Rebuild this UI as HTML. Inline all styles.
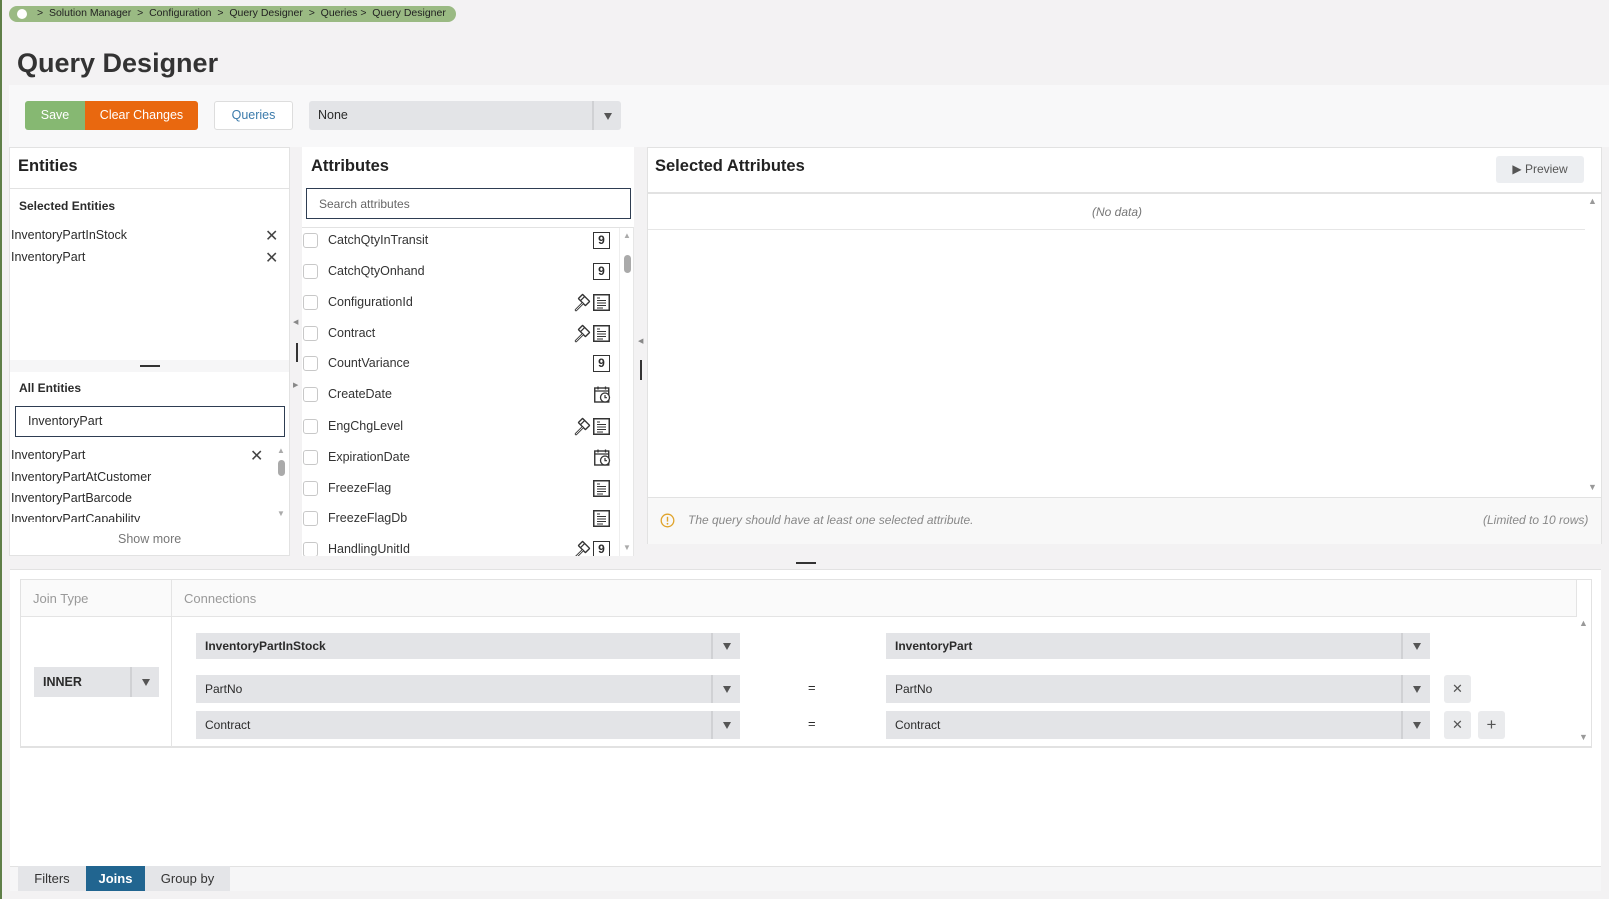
<!DOCTYPE html>
<html><head><meta charset="utf-8">
<style>
*{box-sizing:border-box;margin:0;padding:0}
body{width:1609px;height:899px;overflow:hidden;background:#f3f2f3;font-family:"Liberation Sans",sans-serif;color:#2b2b2b;position:relative}
.a{position:absolute}
.t{position:absolute;white-space:nowrap}
.sel{position:absolute;background:#e3e4e7;font-size:12px}
.sel .dv{position:absolute;right:0;top:0;bottom:0;width:29px;border-left:2px solid #d0d1d4}
.sel .dv:after{content:"";position:absolute;left:10px;top:50%;margin-top:-3px;border-left:4px solid transparent;border-right:4px solid transparent;border-top:7px solid #555}
.cb{position:absolute;left:303px;width:15px;height:15px;border:1px solid #c8c8c8;border-radius:3px;background:#fff}
.an{position:absolute;left:328px;font-size:12.5px;color:#333}
.nine{position:absolute;left:593px;width:17px;height:17px;border:1.5px solid #333;font-size:12px;font-weight:bold;text-align:center;line-height:14px}
.ic{position:absolute}
</style></head><body>
<div class="a" style="left:0;top:0;width:2px;height:899px;background:#5f7f48"></div>
<div class="a" style="left:9px;top:6px;width:447px;height:16px;border-radius:8px;background:#9aba83"></div>
<div class="a" style="left:17px;top:9px;width:10px;height:10px;border-radius:50%;background:#fff"></div>
<div class="t" style="left:37px;top:7px;font-size:10.5px;color:#222">&gt;&nbsp; Solution Manager &nbsp;&gt;&nbsp; Configuration &nbsp;&gt;&nbsp; Query Designer &nbsp;&gt;&nbsp; Queries &gt;&nbsp; Query Designer</div>
<div class="t" style="left:17px;top:48px;font-size:27px;font-weight:bold;color:#333">Query Designer</div>
<div class="a" style="left:9px;top:85px;width:1600px;height:62px;background:#f8f8f9"></div>
<div class="a" style="left:25px;top:101px;width:60px;height:29px;background:#86b872;color:#fff;font-size:12.5px;text-align:center;line-height:29px;border-radius:3px 0 0 3px">Save</div>
<div class="a" style="left:85px;top:101px;width:113px;height:29px;background:#e9680f;color:#fff;font-size:12.5px;text-align:center;line-height:29px;border-radius:0 3px 3px 0">Clear Changes</div>
<div class="a" style="left:214px;top:101px;width:79px;height:29px;background:#fff;border:1px solid #ddd;border-radius:3px;color:#3c7bab;font-size:12.5px;text-align:center;line-height:27px">Queries</div>
<div class="sel" style="left:309px;top:101px;width:312px;height:29px;border-radius:3px;font-size:12.5px"><span class="t" style="left:9px;top:7px">None</span><div class="dv"></div></div>
<div class="a" style="left:9px;top:147px;width:281px;height:409px;background:#fff;border:1px solid #e2e2e2"></div>
<div class="t" style="left:18px;top:157px;font-size:16.5px;font-weight:bold;color:#222">Entities</div>
<div class="a" style="left:9px;top:188px;width:281px;height:172px;border-top:1px solid #e2e2e2"></div>
<div class="t" style="left:19px;top:199px;font-size:12px;font-weight:bold">Selected Entities</div>
<div class="t" style="left:11px;top:228px;font-size:12.5px">InventoryPartInStock</div>
<div class="t" style="left:11px;top:250px;font-size:12.5px">InventoryPart</div>
<div class="t" style="left:265px;top:226px;font-size:16px;color:#444">✕</div>
<div class="t" style="left:265px;top:248px;font-size:16px;color:#444">✕</div>
<div class="a" style="left:10px;top:360px;width:279px;height:12px;background:#f6f6f7"></div>
<div class="a" style="left:140px;top:365px;width:20px;height:2px;background:#333"></div>
<div class="t" style="left:19px;top:381px;font-size:12px;font-weight:bold">All Entities</div>
<div class="a" style="left:15px;top:406px;width:270px;height:31px;border:1.5px solid #2e3d52;background:#fff"></div>
<div class="t" style="left:28px;top:414px;font-size:12.5px">InventoryPart</div>
<div class="a" style="left:10px;top:446px;width:270px;height:76px;overflow:hidden">
<div class="t" style="left:1px;top:2px;font-size:12.5px">InventoryPart</div>
<div class="t" style="left:1px;top:24px;font-size:12.5px">InventoryPartAtCustomer</div>
<div class="t" style="left:1px;top:45px;font-size:12.5px">InventoryPartBarcode</div>
<div class="t" style="left:1px;top:66px;font-size:12.5px">InventoryPartCapability</div>
</div>
<div class="t" style="left:250px;top:446px;font-size:16px;color:#444">✕</div>
<div class="t" style="left:277px;top:446px;font-size:8px;color:#aaa">▲</div>
<div class="a" style="left:278px;top:460px;width:7px;height:16px;border-radius:4px;background:#aaa"></div>
<div class="t" style="left:277px;top:509px;font-size:8px;color:#aaa">▼</div>
<div class="t" style="left:118px;top:532px;font-size:12.5px;color:#777">Show more</div>
<div class="t" style="left:293px;top:318px;font-size:7px;color:#888">◀</div>
<div class="a" style="left:296px;top:343px;width:2px;height:19px;background:#333"></div>
<div class="t" style="left:293px;top:381px;font-size:7px;color:#888">▶</div>
<div class="a" style="left:302px;top:147px;width:332px;height:409px;background:#fff"></div>
<div class="t" style="left:311px;top:157px;font-size:16.5px;font-weight:bold;color:#222">Attributes</div>
<div class="a" style="left:306px;top:188px;width:325px;height:31px;border:1.5px solid #2e3d52;background:#fff"></div>
<div class="t" style="left:319px;top:197px;font-size:12px;color:#666">Search attributes</div>
<div class="a" style="left:302px;top:227px;width:332px;height:329px;border-top:1px solid #e2e2e2;border-right:1px solid #e6e6e6;overflow:hidden">
<div class="a" style="left:317px;top:0;width:1px;height:329px;background:#eee"></div>
</div>
<div class="a" style="left:0;top:0;width:1609px;height:556px;overflow:hidden;pointer-events:none">
<div class="cb" style="top:233px"></div><div class="an" style="top:233px">CatchQtyInTransit</div><div class="nine" style="top:232px">9</div>
<div class="cb" style="top:264px"></div><div class="an" style="top:264px">CatchQtyOnhand</div><div class="nine" style="top:263px">9</div>
<div class="cb" style="top:295px"></div><div class="an" style="top:295px">ConfigurationId</div>
<div class="cb" style="top:326px"></div><div class="an" style="top:326px">Contract</div>
<div class="cb" style="top:356px"></div><div class="an" style="top:356px">CountVariance</div><div class="nine" style="top:355px">9</div>
<div class="cb" style="top:387px"></div><div class="an" style="top:387px">CreateDate</div>
<div class="cb" style="top:419px"></div><div class="an" style="top:419px">EngChgLevel</div>
<div class="cb" style="top:450px"></div><div class="an" style="top:450px">ExpirationDate</div>
<div class="cb" style="top:481px"></div><div class="an" style="top:481px">FreezeFlag</div>
<div class="cb" style="top:511px"></div><div class="an" style="top:511px">FreezeFlagDb</div>
<div class="cb" style="top:542px"></div><div class="an" style="top:542px">HandlingUnitId</div><div class="nine" style="top:541px">9</div>
<svg class="ic" style="left:0;top:0" width="640" height="560">
<defs>
<g id="doc"><rect x="0.75" y="0.75" width="15.5" height="15.5" fill="#fff" stroke="#333" stroke-width="1.5"/><path d="M4 4h3M4 6.5h9M4 9h9M4 11.5h9M4 14h6" stroke="#333" stroke-width="1"/></g>
<g id="ham"><g transform="rotate(45 10 6)"><rect x="5" y="3" width="10" height="6" rx="0.5" fill="#fff" stroke="#333" stroke-width="1.4"/><path d="M8 3v6" stroke="#333" stroke-width="1.2"/></g><path d="M8.5 9.5L2 16" stroke="#333" stroke-width="2.6" stroke-linecap="round"/><path d="M8.5 9.5L2 16" stroke="#fff" stroke-width="0.8" stroke-linecap="round"/></g>
<g id="cal"><rect x="0.75" y="2" width="14" height="14" fill="#fff" stroke="#333" stroke-width="1.4"/><path d="M4 0.5v3M11.5 0.5v3M0.75 5h14" stroke="#333" stroke-width="1.3"/><circle cx="11" cy="11.5" r="4.5" fill="#fff" stroke="#333" stroke-width="1.3"/><path d="M11 9v2.7h2" stroke="#333" stroke-width="1.2" fill="none"/></g>
</defs>
<use href="#ham" x="574" y="294"/><use href="#doc" x="593" y="294"/>
<use href="#ham" x="574" y="325"/><use href="#doc" x="593" y="325"/>
<use href="#cal" x="594" y="386"/>
<use href="#ham" x="574" y="418"/><use href="#doc" x="593" y="418"/>
<use href="#cal" x="594" y="449"/>
<use href="#doc" x="593" y="480"/>
<use href="#doc" x="593" y="510"/>
<use href="#ham" x="574" y="541"/>
</svg>
</div>
<div class="t" style="left:623px;top:231px;font-size:8px;color:#aaa">▲</div>
<div class="a" style="left:624px;top:255px;width:7px;height:18px;border-radius:4px;background:#aaa"></div>
<div class="t" style="left:623px;top:543px;font-size:8px;color:#aaa">▼</div>
<div class="t" style="left:638px;top:337px;font-size:7px;color:#888">◀</div>
<div class="a" style="left:640px;top:360px;width:2px;height:20px;background:#333"></div>
<div class="a" style="left:647px;top:147px;width:955px;height:397px;background:#fff;border:1px solid #e2e2e2"></div>
<div class="t" style="left:655px;top:157px;font-size:16.5px;font-weight:bold;color:#222">Selected Attributes</div>
<div class="a" style="left:1496px;top:156px;width:88px;height:27px;background:#eceef1;border-radius:3px;font-size:12px;color:#555;text-align:center;line-height:27px">▶ Preview</div>
<div class="a" style="left:647px;top:192px;width:955px;height:2px;background:#e2e2e2"></div>
<div class="t" style="left:1092px;top:205px;font-size:12px;font-style:italic;color:#777">(No data)</div>
<div class="a" style="left:648px;top:229px;width:937px;height:1px;background:#e6e6e6"></div>
<div class="t" style="left:1588px;top:196px;font-size:9px;color:#999">▲</div>
<div class="t" style="left:1588px;top:482px;font-size:9px;color:#999">▼</div>
<div class="a" style="left:648px;top:497px;width:953px;height:47px;background:#f8f8f8;border-top:1px solid #e2e2e2"></div>
<svg class="ic" style="left:660px;top:513px" width="15" height="15"><circle cx="7.5" cy="7.5" r="6.3" fill="none" stroke="#e0a32a" stroke-width="1.3"/><path d="M7.5 3.8v4.8" stroke="#e0a32a" stroke-width="1.4"/><circle cx="7.5" cy="10.8" r="0.9" fill="#e0a32a"/></svg>
<div class="t" style="left:688px;top:513px;font-size:12px;font-style:italic;color:#888">The query should have at least one selected attribute.</div>
<div class="t" style="left:1483px;top:513px;font-size:12px;font-style:italic;color:#888">(Limited to 10 rows)</div>
<div class="a" style="left:796px;top:562px;width:20px;height:2px;background:#333"></div>
<div class="a" style="left:10px;top:569px;width:1591px;height:297px;background:#fff;border-top:1px solid #e2e2e2"></div>
<div class="a" style="left:20px;top:579px;width:1572px;height:169px;border:1px solid #e2e2e2;border-bottom:2px solid #e2e2e2"></div>
<div class="a" style="left:21px;top:580px;width:1555px;height:37px;background:#fafafa;border-bottom:1px solid #e4e4e4"></div>
<div class="a" style="left:1576px;top:580px;width:1px;height:37px;background:#e4e4e4"></div>
<div class="a" style="left:171px;top:580px;width:1px;height:167px;background:#e4e4e4"></div>
<div class="t" style="left:33px;top:591px;font-size:13px;color:#999">Join Type</div>
<div class="t" style="left:184px;top:591px;font-size:13px;color:#999">Connections</div>
<div class="sel" style="left:34px;top:667px;width:125px;height:30px"><span class="t" style="left:9px;top:8px;font-weight:bold;font-size:12.5px">INNER</span><div class="dv"></div></div>
<div class="sel" style="left:196px;top:633px;width:544px;height:26px"><span class="t" style="left:9px;top:6px;font-weight:bold">InventoryPartInStock</span><div class="dv"></div></div>
<div class="sel" style="left:196px;top:675px;width:544px;height:28px"><span class="t" style="left:9px;top:7px">PartNo</span><div class="dv"></div></div>
<div class="sel" style="left:196px;top:711px;width:544px;height:28px"><span class="t" style="left:9px;top:7px">Contract</span><div class="dv"></div></div>
<div class="t" style="left:808px;top:680px;font-size:13px">=</div>
<div class="t" style="left:808px;top:716px;font-size:13px">=</div>
<div class="sel" style="left:886px;top:633px;width:544px;height:26px"><span class="t" style="left:9px;top:6px;font-weight:bold">InventoryPart</span><div class="dv"></div></div>
<div class="sel" style="left:886px;top:675px;width:544px;height:28px"><span class="t" style="left:9px;top:7px">PartNo</span><div class="dv"></div></div>
<div class="sel" style="left:886px;top:711px;width:544px;height:28px"><span class="t" style="left:9px;top:7px">Contract</span><div class="dv"></div></div>
<div class="a" style="left:1444px;top:675px;width:27px;height:28px;background:#eaebed;border-radius:3px;text-align:center;line-height:28px;font-size:13px;color:#555">✕</div>
<div class="a" style="left:1444px;top:711px;width:27px;height:28px;background:#eaebed;border-radius:3px;text-align:center;line-height:28px;font-size:13px;color:#555">✕</div>
<div class="a" style="left:1478px;top:711px;width:27px;height:28px;background:#eaebed;border-radius:3px;text-align:center;line-height:27px;font-size:17px;color:#555">+</div>
<div class="t" style="left:1579px;top:618px;font-size:9px;color:#999">▲</div>
<div class="t" style="left:1579px;top:732px;font-size:9px;color:#999">▼</div>
<div class="a" style="left:10px;top:866px;width:1591px;height:25px;background:#f6f6f7;border-top:1px solid #e2e2e2"></div>
<div class="a" style="left:18px;top:866px;width:68px;height:25px;background:#e4e5e8;font-size:13px;text-align:center;line-height:25px;color:#333">Filters</div>
<div class="a" style="left:86px;top:866px;width:59px;height:25px;background:#216590;font-size:13px;text-align:center;line-height:25px;color:#fff;font-weight:bold">Joins</div>
<div class="a" style="left:145px;top:866px;width:85px;height:25px;background:#e4e5e8;font-size:13px;text-align:center;line-height:25px;color:#333">Group by</div>
</body></html>
